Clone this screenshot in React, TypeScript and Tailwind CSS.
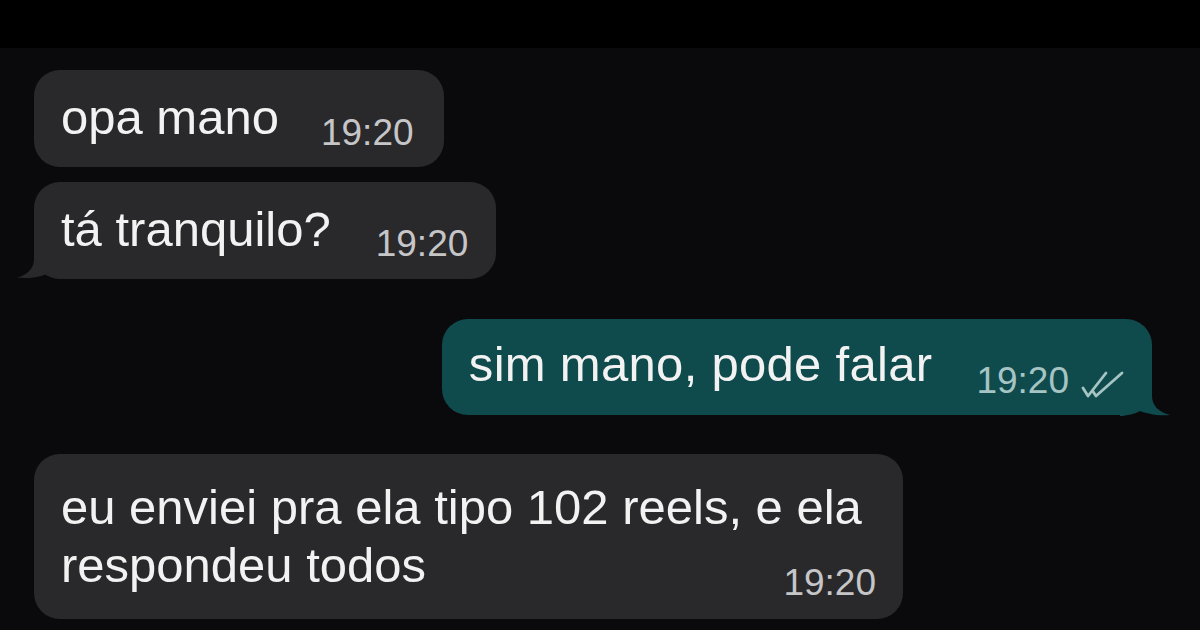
import React from "react";

function LeftTail() {
  return (
    <svg
      className="absolute left-[-17px] bottom-0"
      width="50"
      height="30"
      viewBox="0 0 50 30"
    >
      <path
        d="M17 0 L17 10 C17 20 10 26 0 28.5 C12 30 24 28 32 24 C38 28 45 30 50 30 L50 0 Z"
        fill="#29292b"
      />
    </svg>
  );
}

function RightTail() {
  return (
    <svg
      className="absolute right-[-18px] bottom-[-1px]"
      width="50"
      height="30"
      viewBox="0 0 50 30"
    >
      <path
        d="M32 0 L32 10 C32 20 39 26 50 29 C38 30 26 28 18 24 C12 28 5 30 0 30 L0 0 Z"
        fill="#0f4a4c"
      />
    </svg>
  );
}

function DoubleCheck() {
  return (
    <svg width="44" height="27" viewBox="0 0 44 27" className="ml-[12px] mb-[4px]">
      <g
        fill="none"
        stroke="#a6c4c4"
        strokeWidth="2.8"
        strokeLinecap="round"
        strokeLinejoin="round"
      >
        <path d="M2 17 L7 25 L25 2" />
        <path d="M12 20.5 L15 25 L41 2" />
      </g>
    </svg>
  );
}

function Time({ children, color = "text-[#c6c6c8]" }: { children: React.ReactNode; color?: string }) {
  return (
    <span className={`text-[37px] leading-[42px] whitespace-nowrap ${color}`}>
      {children}
    </span>
  );
}

function App() {
  return (
    <div className="w-[1200px] h-[630px] overflow-hidden bg-[#0a0a0c] font-['Liberation_Sans',Arial,sans-serif] text-[#f2f2f2]">
      <div className="h-[48px] bg-black" />
      <div className="flex flex-col items-start pl-[34px] pr-[48px] pt-[22px]">
        <div className="flex items-end gap-[42px] rounded-[26px] bg-[#29292b] pl-[27px] pr-[30px] pt-[18px] pb-[21px]">
          <span className="text-[49px] leading-[58px] whitespace-nowrap">opa mano</span>
          <span className="mb-[-8px]">
            <Time>19:20</Time>
          </span>
        </div>

        <div className="relative mt-[15px] flex items-end gap-[45px] rounded-[26px] bg-[#29292b] pl-[27px] pr-[28px] pt-[18px] pb-[21px]">
          <LeftTail />
          <span className="relative text-[49px] leading-[58px] whitespace-nowrap">tá tranquilo?</span>
          <span className="relative mb-[-7px]">
            <Time>19:20</Time>
          </span>
        </div>

        <div className="relative mt-[40px] self-end flex items-end rounded-[26px] bg-[#0f4a4c] pl-[27px] pr-[27px] pt-[16px] pb-[22px]">
          <RightTail />
          <span className="relative text-[49px] leading-[58px] tracking-[0.3px] whitespace-nowrap">sim mano, pode falar</span>
          <span className="relative ml-[44px] mb-[-9px] flex items-end">
            <Time color="text-[#a6c4c4]">19:20</Time>
            <DoubleCheck />
          </span>
        </div>

        <div className="mt-[39px] w-[869px] rounded-[26px] bg-[#29292b] pl-[27px] pr-[27px] pt-[24px] pb-[15px]">
          <p className="text-[49px] leading-[58px] whitespace-nowrap">
            eu enviei pra ela tipo 102 reels, e ela
            <br />
            respondeu todos
          </p>
          <div className="flex justify-end mt-[-32px]">
            <Time>19:20</Time>
          </div>
        </div>
      </div>
    </div>
  );
}

export default App;
